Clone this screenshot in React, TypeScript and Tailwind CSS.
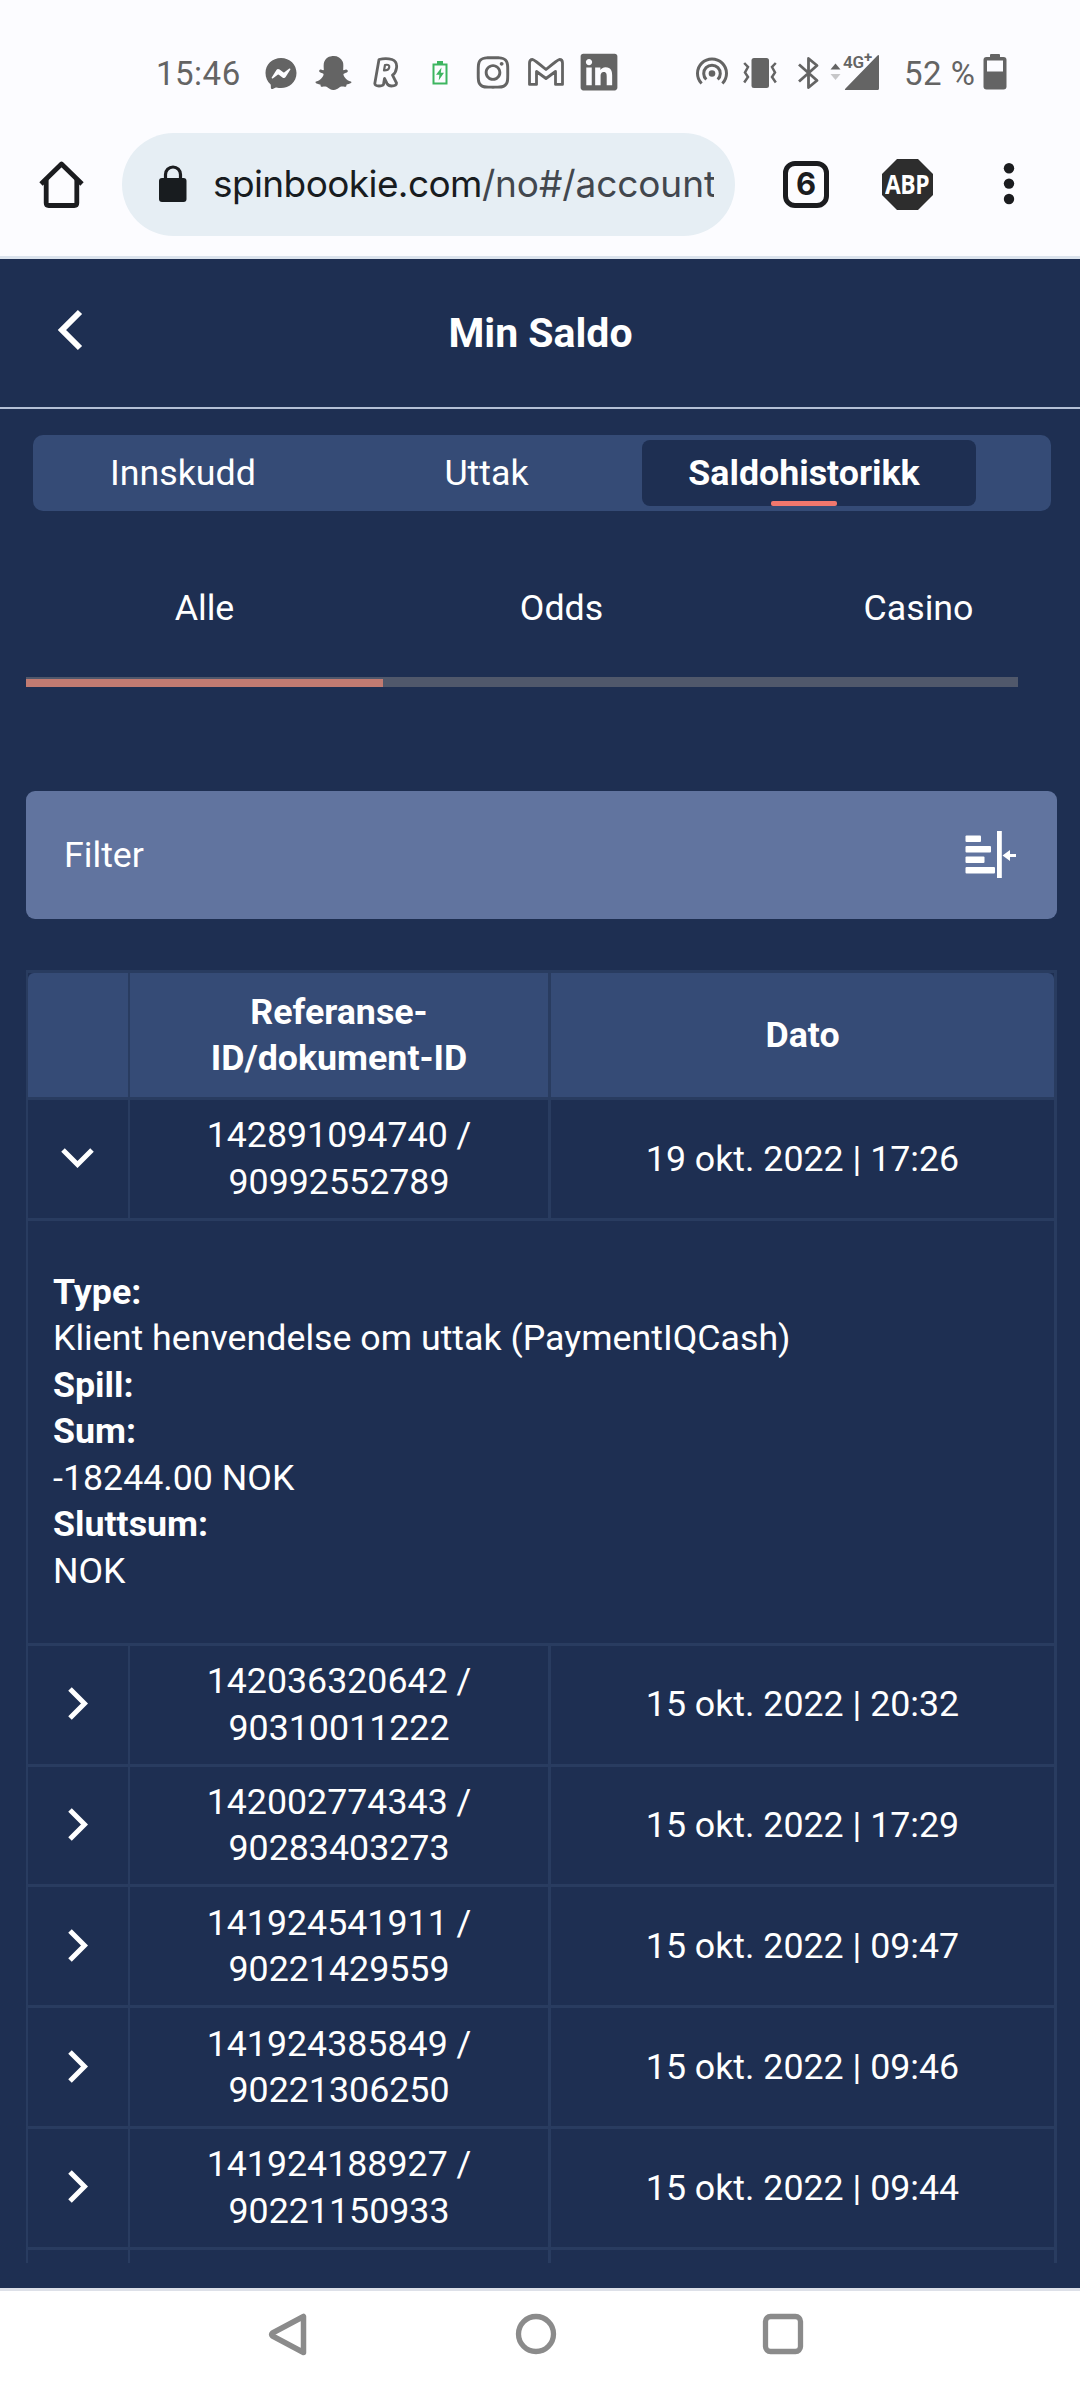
import React from "react";
import { FaFacebookMessenger, FaSnapchatGhost, FaInstagram, FaLinkedin } from "react-icons/fa";

const rows = [
  ["142036320642 /", "90310011222", "15 okt. 2022 | 20:32"],
  ["142002774343 /", "90283403273", "15 okt. 2022 | 17:29"],
  ["141924541911 /", "90221429559", "15 okt. 2022 | 09:47"],
  ["141924385849 /", "90221306250", "15 okt. 2022 | 09:46"],
  ["141924188927 /", "90221150933", "15 okt. 2022 | 09:44"],
];

function StatusBar() {
  return (
    <div className="flex h-[133px] shrink-0 items-start pl-[156px] pt-[54px] text-[#646464]">
      <span className="w-[109px] pt-px text-[33px] leading-[38px] tracking-[0.5px]">15:46</span>
      <FaFacebookMessenger className="mt-[3px] h-[33px] w-[32px]" />
      <FaSnapchatGhost className="mt-[1px] ml-[18px] h-[36px] w-[37px]" />
      <svg className="mt-[3px] ml-[21px] h-[32px] w-[26px]" viewBox="0 0 26 32" fill="none" stroke="currentColor" strokeWidth="2.8" strokeLinejoin="round">
        <path d="M6 2.5Q13 .8 19 2.5Q24.500 4.500 23.500 11Q22.800 16 19.500 18.200L23.500 26Q23.500 29 18.500 29Q15.500 29 14 26.500L11.500 21.500L10.500 27.500Q9.500 29 6 29Q2 29 1.800 26.500Z" />
        <path d="M12 8Q17 7 16.200 10.500Q15.500 13.500 11 13.500Z" strokeWidth="2.2" />
      </svg>
      <svg className="mt-[6px] ml-[33px] h-[26px] w-[16px]" viewBox="0 0 16 26" fill="none">
        <path d="M1.500 4.500H14.500V23.500H1.500Z" stroke="#3db560" strokeWidth="2" />
        <path d="M5 1H11V4.500H5Z" fill="#3db560" />
        <path d="M9.500 7.500L4 14.800H7.400L6.700 20.500L12 12.800H8.800Z" fill="#3db560" />
      </svg>
      <FaInstagram className="ml-[27px] h-[37px] w-[36px]" />
      <svg className="mt-[4px] ml-[17px] h-[28px] w-[36px]" viewBox="0 0 36 28" fill="none" stroke="currentColor" strokeWidth="2.800" strokeLinejoin="round">
        <path d="M1.500 5Q1.500 1.500 4.500 1.500Q6 1.500 18 11.500Q30 1.500 31.500 1.500Q34.500 1.500 34.500 5V26.400H27.500V13.500L18 20.500L8.500 13.500V26.400H1.500Z" />
      </svg>
      <FaLinkedin className="-mt-[3px] ml-[14px] h-[42px] w-[42px]" />

      <svg className="mt-[2px] ml-[75px] h-[32px] w-[34px]" viewBox="0 0 34 32" fill="none" stroke="currentColor" strokeWidth="3">
        <path d="M6.600 27.500A14.500 14.500 0 1 1 27.400 27.500" />
        <path d="M11.300 23.500A8.300 8.300 0 1 1 22.700 23.500" />
        <circle cx="17" cy="17.500" r="3.300" fill="currentColor" stroke="none" />
      </svg>
      <svg className="mt-[3px] ml-[14px] h-[32px] w-[34px]" viewBox="0 0 34 32" fill="none" stroke="currentColor" strokeWidth="2.500">
        <rect x="8.500" y="1" width="17.500" height="30" rx="2.500" fill="currentColor" stroke="none" />
        <path d="M1.200 6L5 10L2 15.500L5 20L1.200 25.500" />
        <path d="M32.800 6L29 10L32 15.500L29 20L32.800 25.500" />
      </svg>
      <svg className="mt-[2px] ml-[20px] h-[34px] w-[24px]" viewBox="0 0 24 34" fill="none" stroke="currentColor" strokeWidth="2.800" strokeLinejoin="round">
        <path d="M2 8.500L20 24.500L11.500 31.500V2.500L20 9.500L2 25.500" />
      </svg>
      <div className="relative ml-[9px] h-[38px] w-[51px]">
        <svg className="h-[38px] w-[51px]" viewBox="0 0 51 38" fill="currentColor">
          <path d="M5.500 9.500L10.500 15.500H.5Z" />
          <path d="M.5 20H10.500L5.500 26Z" opacity=".35" />
          <path d="M49 1.500V34.500Q49 36 47.500 36H16Q14 36 15.500 34.500L47.500 1.500Q49 .500 49 1.500Z" />
        </svg>
        <span className="absolute top-[1px] left-[13px] bg-[#fcfcff] text-[17px] leading-[14px] font-semibold tracking-[-0.2px]">4G</span>
        <span className="absolute -top-[5px] left-[34px] text-[15px] leading-[17px] font-bold">+</span>
      </div>
      <span className="ml-[23px] w-[79px] pt-px text-[33px] leading-[38px] tracking-[0.5px] whitespace-nowrap">52 %</span>
      <svg className="ml-0 h-[36px] w-[24px]" viewBox="0 0 24 36">
        <rect x="7" y="0" width="10" height="5" rx="1" fill="currentColor" />
        <rect x=".5" y="3" width="23" height="32.500" rx="3" fill="currentColor" />
        <rect x="4" y="6.500" width="16" height="11" fill="#fcfcff" />
      </svg>
    </div>
  );
}

function Toolbar() {
  return (
    <div className="flex h-[126px] shrink-0 items-start border-b-[3px] border-[#dbe3ed] pl-[38px]">
      <svg className="mt-[27px] h-[50px] w-[48px]" viewBox="0 0 48 50" fill="none" stroke="#1b1c1f" strokeWidth="4.800" strokeLinejoin="round" strokeLinecap="round">
        <path d="M3 24L23.500 4L44 24" strokeLinecap="butt" />
        <path d="M8.200 20V43Q8.200 45.500 10.700 45.500H36.300Q38.800 45.500 38.800 43V20" />
      </svg>
      <div className="ml-[36px] flex h-[103px] w-[613px] items-center rounded-full bg-[#e6eef4] pl-[37px]">
        <svg className="-mt-[2px] h-[37px] w-[28px]" viewBox="0 0 28 37">
          <path d="M6.500 15V9.500A7.500 7.500 0 0 1 21.500 9.500V15" fill="none" stroke="#1b1c1f" strokeWidth="3.200" />
          <rect x="0" y="13" width="27.500" height="24" rx="3" fill="#181c1f" />
        </svg>
        <div className="-mt-[2px] ml-[26px] w-[501px] overflow-hidden font-['Inter'] text-[37px] leading-[48px] tracking-[-0.6px] whitespace-nowrap text-[#181c1f]">
          spinbookie.com<span className="tracking-[-0.1px] text-[#42474e]">/no#/account/</span>
        </div>
      </div>
      <div className="mt-[28px] ml-[48px] flex h-[47px] w-[46px] items-center justify-center rounded-[12px] border-[5px] border-[#1b1c1f] font-['Inter'] text-[31px] font-bold text-[#1b1c1f]">
        6
      </div>
      <div className="relative mt-[26px] ml-[53px] h-[51px] w-[51px]">
        <svg className="size-full" viewBox="0 0 51 51">
          <path d="M15 0H36L51 15V36L36 51H15L0 36V15Z" fill="#2d2d2d" />
        </svg>
        <span className="absolute inset-0 flex items-center justify-center font-['Open_Sans'] text-[26px] font-bold tracking-[-0.5px] text-white">
          <span className="scale-x-[.88]">ABP</span>
        </span>
      </div>
      <svg className="mt-[29px] ml-[70px] h-[44px] w-[12px]" viewBox="0 0 12 44" fill="#1b1c1f">
        <circle cx="6" cy="6.300" r="5.200" />
        <circle cx="6" cy="21.600" r="5.200" />
        <circle cx="6" cy="37" r="5.200" />
      </svg>
    </div>
  );
}

function Tabs() {
  return (
    <>
      <div className="mt-[26px] ml-[33px] flex h-[76px] w-[1018px] items-center rounded-[10px] bg-[#354b76]">
        <div className="w-[300px] text-center">Innskudd</div>
        <div className="w-[309px] pr-[2px] text-center">Uttak</div>
        <div className="relative flex h-[66px] w-[334px] items-center justify-center rounded-[8px] bg-[#1e2f52] pr-[10px] font-bold">
          Saldohistorikk
          <span className="absolute bottom-0 left-[129px] h-[5px] w-[66px] rounded-[2px] bg-[#f1776d]" />
        </div>
      </div>
      <div className="mt-[57px] ml-[26px] w-[1031px] overflow-hidden">
        <div className="flex h-[109px] w-[1071px] pt-[17px]">
          <div className="w-[357px] text-center">Alle</div>
          <div className="w-[357px] text-center">Odds</div>
          <div className="w-[357px] text-center">Casino</div>
        </div>
      </div>
      <div className="ml-[26px] flex h-[10px] w-[992px] items-end bg-[#50586b]">
        <div className="h-[8px] w-[357px] bg-[#c17b72]" />
      </div>
    </>
  );
}

function Row({ a, b, date, open }: { a: string; b: string; date: string; open?: boolean }) {
  return (
    <div className="flex h-[120.8px] border-b-[3px] border-[#293c60] text-center">
      <div className="flex w-[102px] items-center justify-center border-r-2 border-[#293c60] pb-[2px]">
        <svg className={open ? "-ml-[1px] h-[20px] w-[33px]" : "h-[33px] w-[20px]"} viewBox={open ? "0 0 33 20" : "0 0 20 33"} fill="none" stroke="#fff" strokeWidth="5">
          <path d={open ? "M2 2L16.500 16.500L31 2" : "M2 2L16.500 16.500L2 31"} />
        </svg>
      </div>
      <div className="flex w-[421px] items-center justify-center border-r-[3px] border-[#293c60]">
        <div>
          <div>{a}</div>
          <div>{b}</div>
        </div>
      </div>
      <div className="flex flex-1 items-center justify-center">
        <div>{date}</div>
      </div>
    </div>
  );
}

export default function App() {
  return (
    <div className="flex h-[2400px] w-[1080px] flex-col overflow-hidden bg-[#fcfcff] font-['Roboto',sans-serif]">
      <StatusBar />
      <Toolbar />
      <main className="h-[2029px] shrink-0 overflow-hidden bg-[#1e2f52] text-[35.75px] leading-[46.475px] text-white">
        <header className="flex h-[150px] items-center border-b-2 border-[#b4c0d6] pl-[57px]">
          <svg className="-mt-[6px] h-[42px] w-[26px]" viewBox="0 0 26 42" fill="none" stroke="#fff" strokeWidth="6">
            <path d="M23 3L5 21L23 39" />
          </svg>
          <h1 className="flex-1 pr-[82px] text-center text-[41px] font-bold">Min Saldo</h1>
        </header>
        <Tabs />
        <div className="mt-[104px] ml-[26px] flex h-[128px] w-[1031px] items-center rounded-[9px] bg-[#61749f] pl-[38px]">
          <span className="flex-1">Filter</span>
          <svg className="mr-[40px] h-[48px] w-[52px]" viewBox="0 0 52 48" fill="#fff">
            <rect x=".500" y="4.500" width="15.500" height="6.500" rx="1" />
            <rect x=".500" y="15" width="25.500" height="6.500" rx="1" />
            <rect x=".500" y="25.500" width="19" height="6.500" rx="1" />
            <rect x=".500" y="36" width="29.500" height="6.500" rx="1" />
            <rect x="32" y="0" width="4.800" height="47" />
            <path d="M37.500 24.500L45 19V23H51V26H45V30Z" />
          </svg>
        </div>
        <div className="mt-[51px] ml-[26px] h-[1293px] w-[1031px] overflow-hidden border-x-[3px] border-t-[3px] border-l-2 border-[#293c60]">
          <div className="flex h-[127px] rounded-t-[6px] border-b-[3px] border-[#293c60] bg-[#354b76] text-center font-bold">
            <div className="w-[102px] border-r-2 border-[#293c60]" />
            <div className="flex w-[421px] items-center justify-center border-r-[3px] border-[#293c60]">
              <div className="mt-[0.5px]">
                <div>Referanse-</div>
                <div>ID/dokument-ID</div>
              </div>
            </div>
            <div className="flex flex-1 items-center justify-center">Dato</div>
          </div>
          <Row a="142891094740 /" b="90992552789" date="19 okt. 2022 | 17:26" open />
          <div className="h-[425px] border-b-[3px] border-[#293c60] pt-[48px] pl-[25px]">
            <div className="font-bold">Type:</div>
            <div>Klient henvendelse om uttak (PaymentIQCash)</div>
            <div className="font-bold">Spill:</div>
            <div className="font-bold">Sum:</div>
            <div>-18244.00 NOK</div>
            <div className="font-bold">Sluttsum:</div>
            <div>NOK</div>
          </div>
          {rows.map(([a, b, d]) => (
            <Row key={a} a={a} b={b} date={d} />
          ))}
          <div className="flex h-[40px]">
            <div className="w-[102px] border-r-2 border-[#293c60]" />
            <div className="w-[421px] border-r-[3px] border-[#293c60]" />
          </div>
        </div>
      </main>
      <nav className="flex h-[112px] shrink-0 items-start border-t-[3px] border-[#dde0e8] bg-white pt-[21px] pl-[267px]">
        <svg className="h-[46px] w-[40px]" viewBox="0 0 40 46" fill="none" stroke="#8b8b8b" strokeWidth="5.500" strokeLinejoin="round">
          <path d="M36.500 4.500V40.500L5.500 24Q4 22.500 5.500 21Z" />
        </svg>
        <svg className="mt-[1px] ml-[208px] h-[42px] w-[42px]" viewBox="0 0 42 42" fill="none" stroke="#8b8b8b" strokeWidth="5.300">
          <circle cx="21" cy="21" r="17.500" />
        </svg>
        <svg className="mt-[1px] ml-[205px] h-[42px] w-[42px]" viewBox="0 0 42 42" fill="none" stroke="#8b8b8b" strokeWidth="5.300">
          <rect x="3.500" y="3.500" width="35" height="35" rx="5" />
        </svg>
      </nav>
    </div>
  );
}
